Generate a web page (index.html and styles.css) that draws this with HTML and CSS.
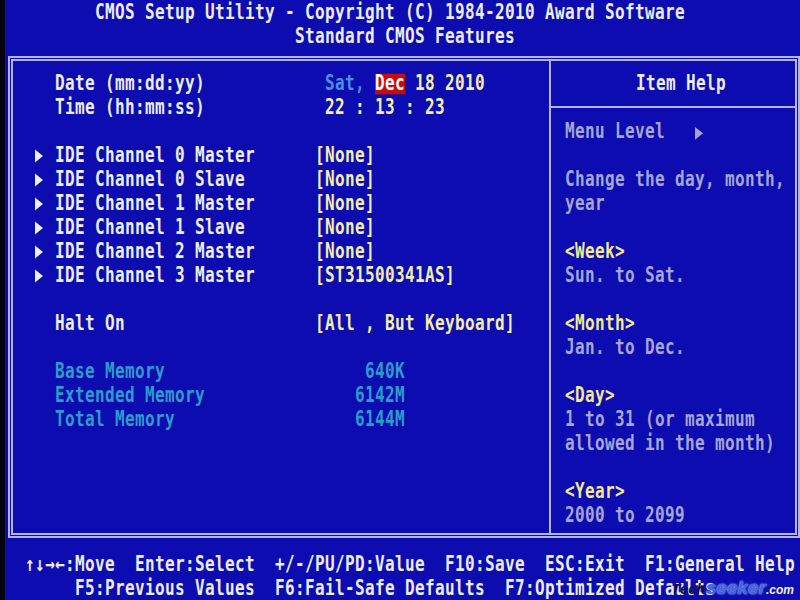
FILE: index.html
```html
<!DOCTYPE html>
<html>
<head>
<meta charset="utf-8">
<title>CMOS Setup Utility</title>
<link rel="stylesheet" href="styles.css">
</head>
<body>
<div class="screen">
  <header class="top">
    <div class="ln t1">CMOS Setup Utility - Copyright (C) 1984-2010 Award Software</div>
    <div class="ln t2">Standard CMOS Features</div>
  </header>

  <main class="box">
    <section class="left">
      <div class="ln row"><span class="mk"></span><span class="lbl">Date (mm:dd:yy)</span><span class="val dt"><span class="day">Sat,</span> <span class="sel">Dec</span> 18 2010</span></div>
      <div class="ln row"><span class="mk"></span><span class="lbl">Time (hh:mm:ss)</span><span class="val dt">22 : 13 : 23</span></div>
      <div class="ln blank"></div>
      <div class="ln row"><span class="mk"><i class="tri"></i></span><span class="lbl">IDE Channel 0 Master</span><span class="val">[None]</span></div>
      <div class="ln row"><span class="mk"><i class="tri"></i></span><span class="lbl">IDE Channel 0 Slave</span><span class="val">[None]</span></div>
      <div class="ln row"><span class="mk"><i class="tri"></i></span><span class="lbl">IDE Channel 1 Master</span><span class="val">[None]</span></div>
      <div class="ln row"><span class="mk"><i class="tri"></i></span><span class="lbl">IDE Channel 1 Slave</span><span class="val">[None]</span></div>
      <div class="ln row"><span class="mk"><i class="tri"></i></span><span class="lbl">IDE Channel 2 Master</span><span class="val">[None]</span></div>
      <div class="ln row"><span class="mk"><i class="tri"></i></span><span class="lbl">IDE Channel 3 Master</span><span class="val">[ST31500341AS]</span></div>
      <div class="ln blank"></div>
      <div class="ln row"><span class="mk"></span><span class="lbl">Halt On</span><span class="val">[All , But Keyboard]</span></div>
      <div class="ln blank"></div>
      <div class="ln row mem"><span class="mk"></span><span class="lbl">Base Memory</span><span class="val num">640K</span></div>
      <div class="ln row mem"><span class="mk"></span><span class="lbl">Extended Memory</span><span class="val num">6142M</span></div>
      <div class="ln row mem"><span class="mk"></span><span class="lbl">Total Memory</span><span class="val num">6144M</span></div>
    </section>

    <aside class="right">
      <div class="help-head"><div class="ln">Item Help</div></div>
      <div class="help-body">
        <div class="ln">Menu Level   <i class="tri gray"></i></div>
        <div class="ln blank"></div>
        <div class="ln">Change the day, month,</div>
        <div class="ln">year</div>
        <div class="ln blank"></div>
        <div class="ln key">&lt;Week&gt;</div>
        <div class="ln">Sun. to Sat.</div>
        <div class="ln blank"></div>
        <div class="ln key">&lt;Month&gt;</div>
        <div class="ln">Jan. to Dec.</div>
        <div class="ln blank"></div>
        <div class="ln key">&lt;Day&gt;</div>
        <div class="ln">1 to 31 (or maximum</div>
        <div class="ln">allowed in the month)</div>
        <div class="ln blank"></div>
        <div class="ln key">&lt;Year&gt;</div>
        <div class="ln">2000 to 2099</div>
      </div>
    </aside>
  </main>

  <footer class="foot">
    <div class="ln f1">↑↓→←:Move  Enter:Select  +/-/PU/PD:Value  F10:Save  ESC:Exit  F1:General Help</div>
    <div class="ln f2">F5:Previous Values  F6:Fail-Safe Defaults  F7:Optimized Defaults</div>
    <div class="mark"><span class="m1">Tech</span><span class="m2">seeker</span><span class="m3">.com</span></div>
  </footer>
</div>
</body>
</html>
```

FILE: styles.css
```css
html, body {
  margin: 0;
  padding: 0;
  background: #000;
}

body {
  width: 800px;
  height: 600px;
  overflow: hidden;
  font-family: "DejaVu Sans Mono", "Liberation Mono", monospace;
  font-weight: bold;
  font-size: 16px;
  letter-spacing: 0.367px;
  color: #ececf4;
}

.screen {
  position: relative;
  box-sizing: border-box;
  width: 800px;
  height: 600px;
  border-left: 5px solid #050510;
  background: #0c0cb0;
}

.ln {
  height: 24px;
  line-height: 24px;
  white-space: pre;
  transform: translateY(1px) scaleY(1.28);
}

.blank { transform: none; }

.top .t1 { padding-left: 90px; }
.top .t2 { padding-left: 290px; }

.box {
  display: flex;
  margin: 8px 0 0 3px;
  height: 482px;
  box-sizing: border-box;
  border: 5px double #b4b4ea;
}

.left {
  width: 536px;
  padding-top: 10px;
  border-right: 2px solid #b4b4ea;
}

.row {
  display: flex;
  padding-left: 22px;
}

.mk {
  width: 20px;
  display: flex;
  align-items: center;
}

.tri {
  display: inline-block;
  width: 0;
  height: 0;
  border-top: 5px solid transparent;
  border-bottom: 5px solid transparent;
  border-left: 8px solid #ececf4;
}

.tri.gray { border-left-color: #a4a4d4; vertical-align: -1px; }

.lbl { width: 260px; }

.val { color: #f2eeaa; }
.val.dt { padding-left: 10px; }
.day { color: #4c8ee4; }
.sel {
  display: inline-block;
  line-height: 16px;
  background: #c80a0a;
  color: #ffffff;
}

.mem { color: #2c9ccc; }
.mem .val { color: #2c9ccc; }
.val.num {
  width: 90px;
  text-align: right;
}

.right {
  flex: 1;
  display: flex;
  flex-direction: column;
}

.help-head {
  padding: 10px 0 11px 85px;
  border-bottom: 2px solid #b4b4ea;
}

.help-body {
  padding: 11px 0 0 14px;
  color: #a6a6d6;
}

.help-body .key { color: #f0e894; }

.foot {
  margin-top: 14px;
  color: #ececf4;
}

.foot .f1 { padding-left: 20px; }
.foot .f2 { padding-left: 70px; }

.mark {
  position: absolute;
  right: 6px;
  bottom: 1px;
  font-family: "Liberation Sans", Arial, sans-serif;
  font-style: italic;
  font-weight: bold;
  letter-spacing: 0;
  line-height: 18px;
}

.mark .m1 { color: #10104a; font-size: 15px; }
.mark .m2 { color: #3a66e8; font-size: 19px; text-shadow: 0 0 2px #dde; }
.mark .m3 { color: #f0f0f8; font-size: 12px; }
```
